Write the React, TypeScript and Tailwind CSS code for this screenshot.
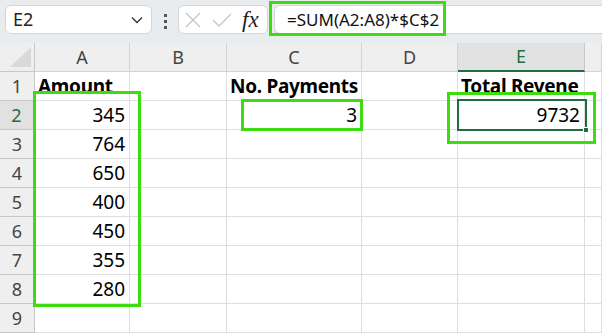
import React from 'react';

const COLS = ['A', 'B', 'C', 'D', 'E', 'F'];

type Cell = { text: string; bold?: boolean; right?: boolean };

// row -> col -> cell content
const DATA: Record<number, Record<string, Cell>> = {
  1: {
    A: { text: 'Amount', bold: true },
    C: { text: 'No. Payments', bold: true },
    E: { text: 'Total Revene', bold: true },
  },
  2: { A: { text: '345', right: true }, C: { text: '3', right: true }, E: { text: '9732', right: true } },
  3: { A: { text: '764', right: true } },
  4: { A: { text: '650', right: true } },
  5: { A: { text: '400', right: true } },
  6: { A: { text: '450', right: true } },
  7: { A: { text: '355', right: true } },
  8: { A: { text: '280', right: true } },
  9: {},
};

const font = { fontFamily: '"Noto Sans", "Open Sans", sans-serif' };

function Toolbar() {
  return (
    <div className="relative flex h-[43px] items-start bg-[#e8ecef] pt-[5px]">
      {/* name box */}
      <div className="ml-[5px] flex h-[29px] w-[147px] items-center justify-between rounded-[6px] border border-[#d3d6d9] bg-white pl-[7px] pr-[7px]">
        <span className="text-[18px] text-[#222]">E2</span>
        <svg width="12" height="8" viewBox="0 0 12 8" className="mr-[1px]">
          <path d="M1 1.5 L6 6.5 L11 1.5" fill="none" stroke="#333" strokeWidth="1.3" />
        </svg>
      </div>
      {/* dots */}
      <div className="ml-[12px] mt-[9px] flex w-[4px] flex-col gap-[3px]">
        <div className="h-[3px] w-[3px] bg-[#555]" />
        <div className="h-[3px] w-[3px] bg-[#555]" />
        <div className="h-[3px] w-[3px] bg-[#555]" />
      </div>
      {/* cancel / enter / fx */}
      <div className="ml-[10px] flex h-[29px] w-[90px] items-center rounded-[6px] border border-[#d3d6d9] bg-white pl-[6px]">
        <svg width="16" height="16" viewBox="0 0 16 16">
          <path d="M1 1 L15 15 M15 1 L1 15" stroke="#c4c4c4" strokeWidth="1.3" />
        </svg>
        <svg width="20" height="16" viewBox="0 0 20 16" className="ml-[11px]">
          <path d="M1 8 L7 14 L19 2" fill="none" stroke="#c4c4c4" strokeWidth="1.3" />
        </svg>
        <span
          className="ml-[10px] text-[23px] italic leading-none text-[#222]"
          style={{ fontFamily: '"Liberation Serif", "DejaVu Serif", serif' }}
        >
          fx
        </span>
      </div>
      {/* formula */}
      <div className="ml-[6px] flex h-[29px] flex-1 items-center rounded-l-[6px] border border-r-0 border-[#d3d6d9] bg-white pl-[12px]">
        <span className="text-[17px] text-[#111]">=SUM(A2:A8)*$C$2</span>
      </div>
      <div className="absolute left-[269px] top-[1px] h-[35px] w-[177px] border-[3px] border-[#3cdc10]" />
    </div>
  );
}

function Grid() {
  return (
    <div className="relative grid grid-cols-[35px_95px_97px_135px_96px_127px_1fr]">
      {/* header row */}
      <div className="relative h-[29px] border-b border-r border-[#c8c8c8] bg-[#efefef]">
        <svg width="22" height="21" viewBox="0 0 22 21" className="absolute left-[10px] top-[4px]">
          <path d="M21 0 L21 20 L0 20 Z" fill="#d9d9d9" />
        </svg>
      </div>
      {COLS.map((c) =>
        c === 'E' ? (
          <div
            key={c}
            className="flex h-[29px] items-center justify-center border-b-[2px] border-r border-b-[#1e6e42] border-r-[#c8c8c8] bg-[#e1e1e1] text-[18px] text-[#1e6e42]"
          >
            {c}
          </div>
        ) : (
          <div
            key={c}
            className="flex h-[29px] items-center justify-center border-b border-r border-[#d4d4d4] bg-[#efefef] text-[18px] text-[#444]"
          >
            {c === 'F' ? '' : c}
          </div>
        )
      )}
      {/* body rows */}
      {Object.keys(DATA).map((r) => {
        const row = Number(r);
        const selected = row === 2;
        return (
          <React.Fragment key={r}>
            <div
              className={
                selected
                  ? 'flex h-[29px] items-center justify-center border-b border-r-[2px] border-b-[#c8c8c8] border-r-[#1e6e42] bg-[#e1e1e1] text-[18px] text-[#1e6e42]'
                  : 'flex h-[29px] items-center justify-center border-b border-r border-[#c8c8c8] bg-[#efefef] text-[18px] text-[#444]'
              }
            >
              {row}
            </div>
            {COLS.map((c) => {
              const cell = DATA[row][c];
              return (
                <div
                  key={c}
                  className={
                    'flex h-[29px] items-end overflow-visible whitespace-nowrap border-b border-r border-[#dedede] bg-white pb-[1px] text-[19px] leading-[26px] text-black ' +
                    (cell?.right ? 'justify-end pr-[4px]' : 'pl-[3px]') +
                    (cell?.bold ? ' font-bold tracking-[-0.3px]' : '')
                  }
                >
                  {cell?.text}
                </div>
              );
            })}
          </React.Fragment>
        );
      })}

      {/* active cell E2 */}
      <div className="absolute left-[457px] top-[56px] h-[32px] w-[130px] border-[2px] border-[#1e6e42]" />
      <div className="absolute left-[583px] top-[84px] h-[6px] w-[6px] border border-white bg-[#1e6e42]" />

      {/* annotation boxes */}
      <div className="absolute left-[33px] top-[48px] h-[216px] w-[108px] border-[3px] border-[#3cdc10]" />
      <div className="absolute left-[241px] top-[56px] h-[32px] w-[122px] border-[3px] border-[#3cdc10]" />
      <div className="absolute left-[447px] top-[49px] h-[52px] w-[149px] border-[3px] border-[#3cdc10]" />
    </div>
  );
}

export default function App() {
  return (
    <div className="h-[335px] w-[602px] overflow-hidden bg-white" style={font}>
      <Toolbar />
      <Grid />
    </div>
  );
}
